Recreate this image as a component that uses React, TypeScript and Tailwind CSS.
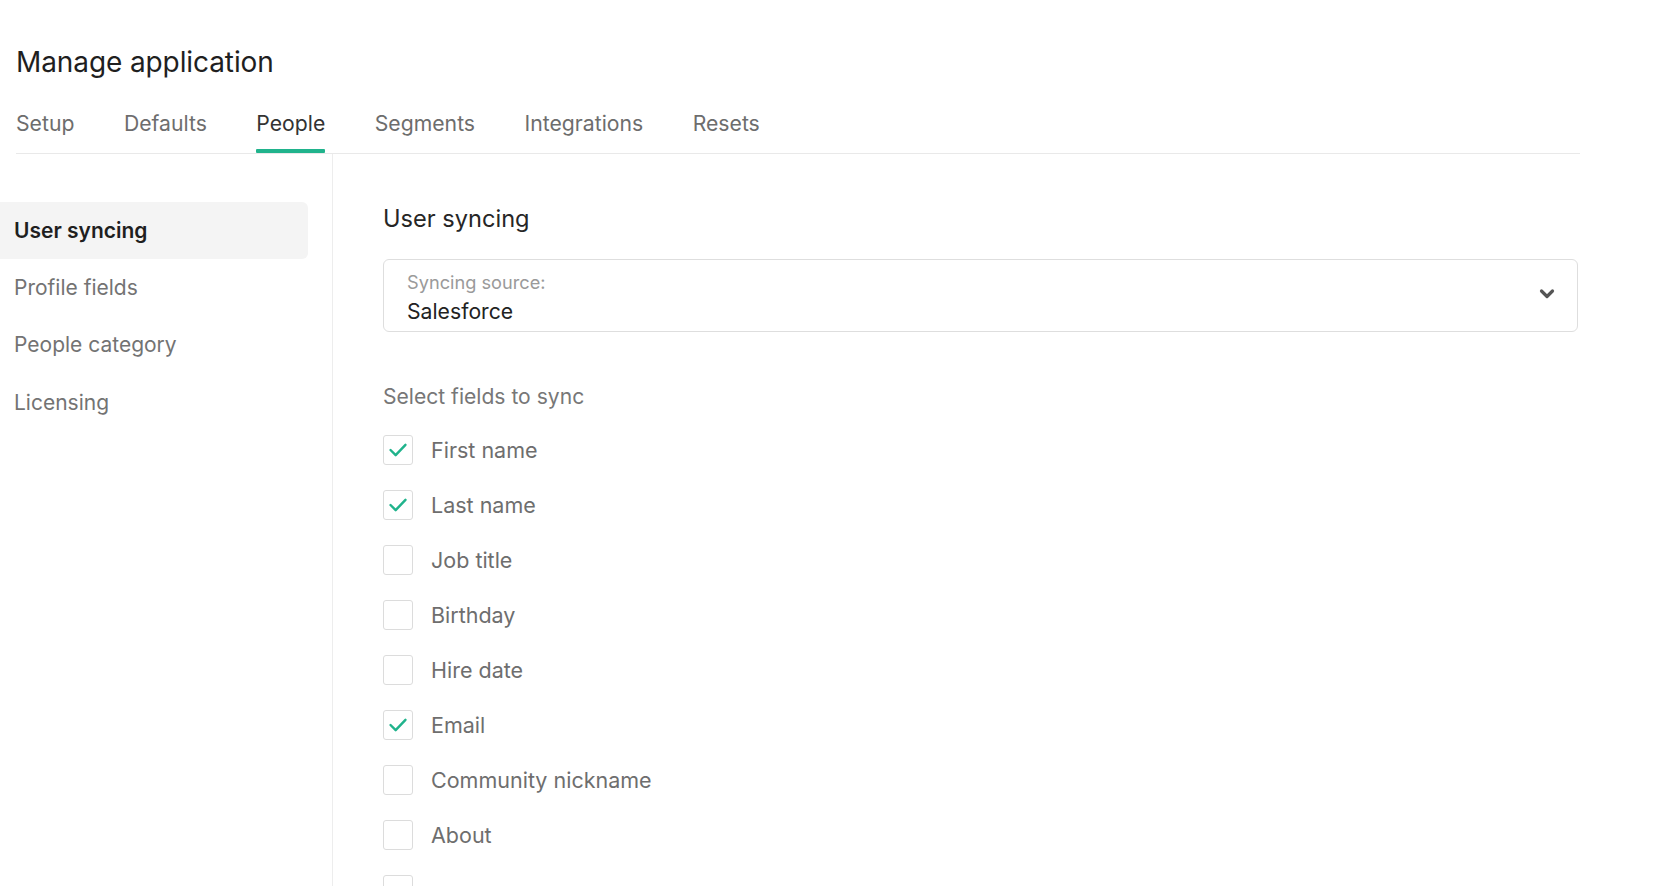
import React from "react";

const tabs = ["Setup", "Defaults", "People", "Segments", "Integrations", "Resets"];
const sideItems = ["User syncing", "Profile fields", "People category", "Licensing"];
const fields: { label: string; checked: boolean }[] = [
  { label: "First name", checked: true },
  { label: "Last name", checked: true },
  { label: "Job title", checked: false },
  { label: "Birthday", checked: false },
  { label: "Hire date", checked: false },
  { label: "Email", checked: true },
  { label: "Community nickname", checked: false },
  { label: "About", checked: false },
  { label: "", checked: false },
];

function Check() {
  return (
    <svg width="30" height="30" viewBox="0 0 30 30" fill="none">
      <polyline
        points="7,15 12.5,20.5 23,9.5"
        stroke="#20b38c"
        strokeWidth="2.6"
        strokeLinecap="round"
        strokeLinejoin="round"
      />
    </svg>
  );
}

export default function App() {
  return (
    <div
      className="w-full h-[886px] overflow-hidden bg-white text-[#222]"
      style={{ fontFamily: "Inter, 'Noto Sans', sans-serif" }}
    >
      <div className="pl-4 pt-[45px]">
        <h1 className="text-[28px] leading-[34px] font-normal text-[#1f1f1f] tracking-[-0.1px]">
          Manage application
        </h1>
        <div className="mt-[29px] w-[1564px] flex gap-[49.5px] border-b border-[#e9e9e9]">
          {tabs.map((t) => (
            <div key={t} className="flex flex-col">
              <span
                className={
                  "text-[21.2px] leading-[30px] pb-[11px] " +
                  (t === "People" ? "text-[#333]" : "text-[#6d6d6d]")
                }
              >
                {t}
              </span>
              <div
                className={"h-[4px] rounded-[1px] " + (t === "People" ? "bg-[#20b38c]" : "bg-transparent")}
              />
            </div>
          ))}
        </div>
      </div>
      <div className="flex h-full">
        <div className="w-[333px] shrink-0 border-r border-[#ededed] pt-[48px]">
          {sideItems.map((s, i) => (
            <div
              key={s}
              className={
                "w-[308px] h-[57.3px] flex items-center pl-[14px] text-[21px] rounded-r-md " +
                (i === 0 ? "bg-[#f4f4f4] font-semibold text-[#1f1f1f]" : "text-[#737373]")
              }
            >
              {s}
            </div>
          ))}
        </div>
        <div className="pl-[50px] pt-[50px]">
          <h2 className="text-[23.6px] leading-[30px] font-normal text-[#262626]">User syncing</h2>
          <div className="mt-[25px] w-[1195px] h-[73px] border border-[#dedede] rounded-[6px] flex items-start justify-between pl-[23px] pr-[22px] pt-[10px]">
            <div className="flex flex-col">
              <span className="text-[18.2px] leading-[24px] text-[#9a9a9a]">Syncing source:</span>
              <span className="mt-[2px] text-[21.2px] leading-[30px] text-[#222]">Salesforce</span>
            </div>
            <svg className="mt-[18px]" width="16" height="12" viewBox="0 0 16 12" fill="none">
              <polyline
                points="2.5,3 8,8.5 13.5,3"
                stroke="#555"
                strokeWidth="3.2"
                strokeLinecap="round"
                strokeLinejoin="round"
              />
            </svg>
          </div>
          <div className="mt-[50px] text-[21.1px] leading-[30px] text-[#777]">Select fields to sync</div>
          <div className="mt-[10px] flex flex-col">
            {fields.map((f, i) => (
              <div key={i} className="h-[55.1px] flex items-center gap-[18px]">
                <div className="w-[30px] h-[30px] border border-[#dcdcdc] rounded-[3px] flex items-center justify-center shrink-0">
                  {f.checked && <Check />}
                </div>
                {f.label && (
                  <span className="text-[21.5px] leading-[30px] text-[#6e6e6e]">{f.label}</span>
                )}
              </div>
            ))}
          </div>
        </div>
      </div>
    </div>
  );
}
